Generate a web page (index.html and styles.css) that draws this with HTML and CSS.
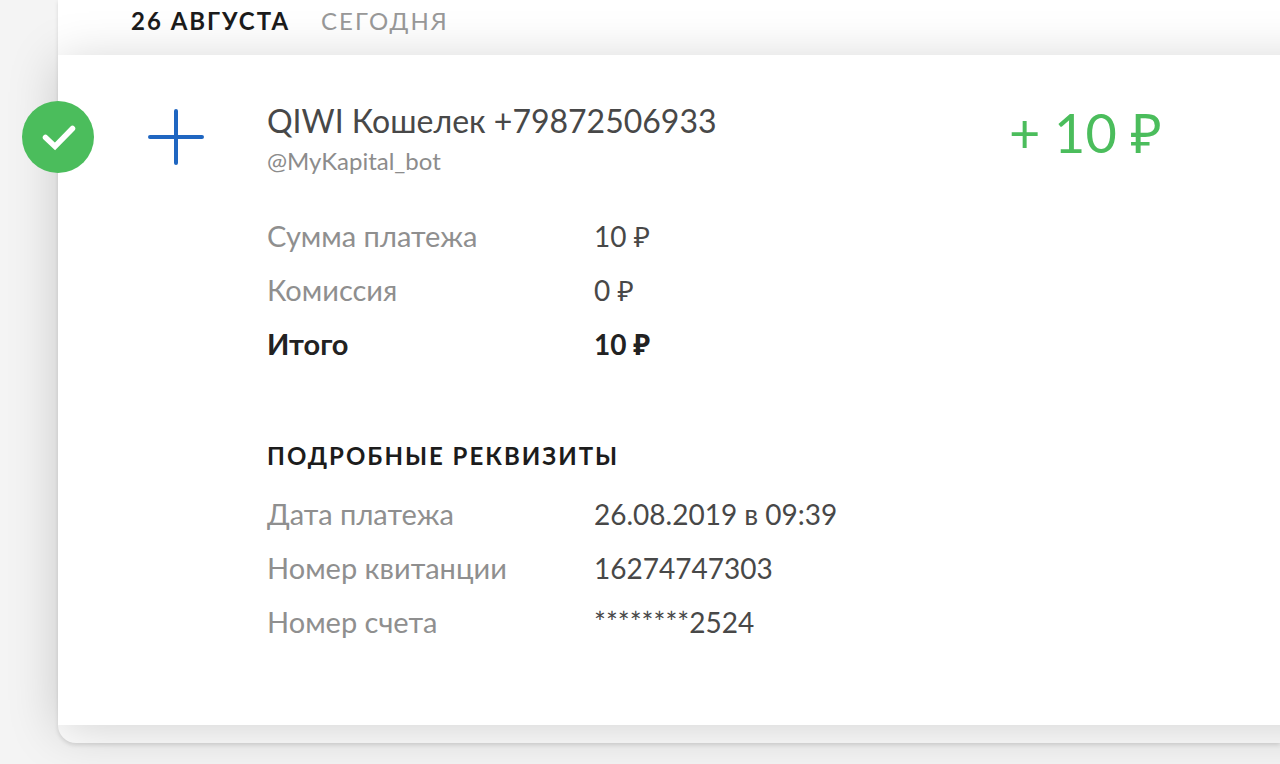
FILE: index.html
```html
<!DOCTYPE html>
<html lang="ru">
<head>
<meta charset="utf-8">
<meta name="viewport" content="width=device-width, initial-scale=1">
<title>История платежей</title>
<link rel="stylesheet" href="styles.css">
</head>
<body>
<div class="page">
<main class="sheet">
  <h2 class="day"><span class="day-date">26 августа</span><span class="day-name">сегодня</span></h2>
  <article class="payment">
    <svg class="status" viewBox="0 0 72 72" role="img" aria-label="Успешно"><circle cx="36" cy="36" r="36" fill="#4bbd5c"/><path d="M23.500 36.500l9.500 9L50.500 27.500" fill="none" stroke="#fff" stroke-width="5.500" stroke-linecap="round" stroke-linejoin="miter"/></svg>
    <svg class="logo" viewBox="0 0 56 56" aria-hidden="true"><path d="M2 28h52M28 2v52" fill="none" stroke="#1f66c1" stroke-width="4" stroke-linecap="round"/></svg>
    <div class="info">
      <h3 class="title">QIWI Кошелек +79872506933</h3>
      <p class="comment">@MyKapital_bot</p>
      <dl class="details">
        <dt>Сумма платежа</dt><dd>10 ₽</dd>
        <dt>Комиссия</dt><dd>0 ₽</dd>
        <dt class="total">Итого</dt><dd class="total">10 ₽</dd>
      </dl>
      <h4 class="subtitle">Подробные реквизиты</h4>
      <dl class="details">
        <dt>Дата платежа</dt><dd>26.08.2019 в 09:39</dd>
        <dt>Номер квитанции</dt><dd>16274747303</dd>
        <dt>Номер счета</dt><dd>********2524</dd>
      </dl>
    </div>
    <p class="amount">+ 10 ₽</p>
  </article>
</main>
</div>
</body>
</html>
```
FILE: styles.css
```css
* {
  box-sizing: border-box;
}

body {
  margin: 0;
  background: #f4f4f4;
  color: #484848;
  font-family: Lato, "Noto Sans", sans-serif;
}

h2, h3, h4, p, dl, dd {
  margin: 0;
  font-weight: 400;
}

.page {
  min-height: 100vh;
  overflow-x: clip;
}

.sheet {
  margin-left: 58px;
  padding-bottom: 18px;
  background: #fff;
  border-bottom-left-radius: 18px;
  box-shadow: 0 2px 4px rgba(0, 0, 0, 0.12);
}

.day {
  display: flex;
  gap: 31px;
  padding: 5px 73px 18px;
  font-size: 24px;
  line-height: 32px;
  letter-spacing: 2px;
  text-transform: uppercase;
}

.day-date {
  color: #1c1c1c;
  font-weight: 700;
}

.day-name {
  color: #999;
}

.payment {
  position: relative;
  isolation: isolate;
  display: flex;
  align-items: flex-start;
  padding: 48px 118px 76px 90px;
}

/* Raised backdrop; its shadow does not fade at the right edge of the window. */
.payment::before {
  content: "";
  position: absolute;
  inset: 0 -80px 0 0;
  z-index: -1;
  background: #fff;
  box-shadow: 0 6px 48px rgba(0, 0, 0, 0.18);
}

.status {
  position: absolute;
  top: 46px;
  left: -36px;
  width: 72px;
  height: 72px;
}

.logo {
  flex: none;
  width: 56px;
  height: 56px;
  margin: 6px 63px 0 0;
}

.info {
  flex: 1;
}

.title {
  font-size: 32px;
  line-height: 36px;
}

.comment {
  margin-top: 4px;
  color: #8c8c8c;
  font-size: 24px;
  line-height: 36px;
}

.details {
  display: grid;
  grid-template-columns: 327px 1fr;
  margin-top: 30px;
  font-size: 28px;
  line-height: 54px;
}

.details dt {
  color: #8f8f8f;
  font-size: 29px;
}

.details .total {
  color: #222;
  font-weight: 700;
}

.subtitle {
  margin-top: 67px;
  color: #1c1c1c;
  font-size: 24px;
  font-weight: 700;
  line-height: 36px;
  letter-spacing: 2px;
  text-transform: uppercase;
}

.subtitle + .details {
  margin-top: 13px;
}

.amount {
  color: #4bbd5c;
  font-size: 54px;
  line-height: 60px;
}
```
